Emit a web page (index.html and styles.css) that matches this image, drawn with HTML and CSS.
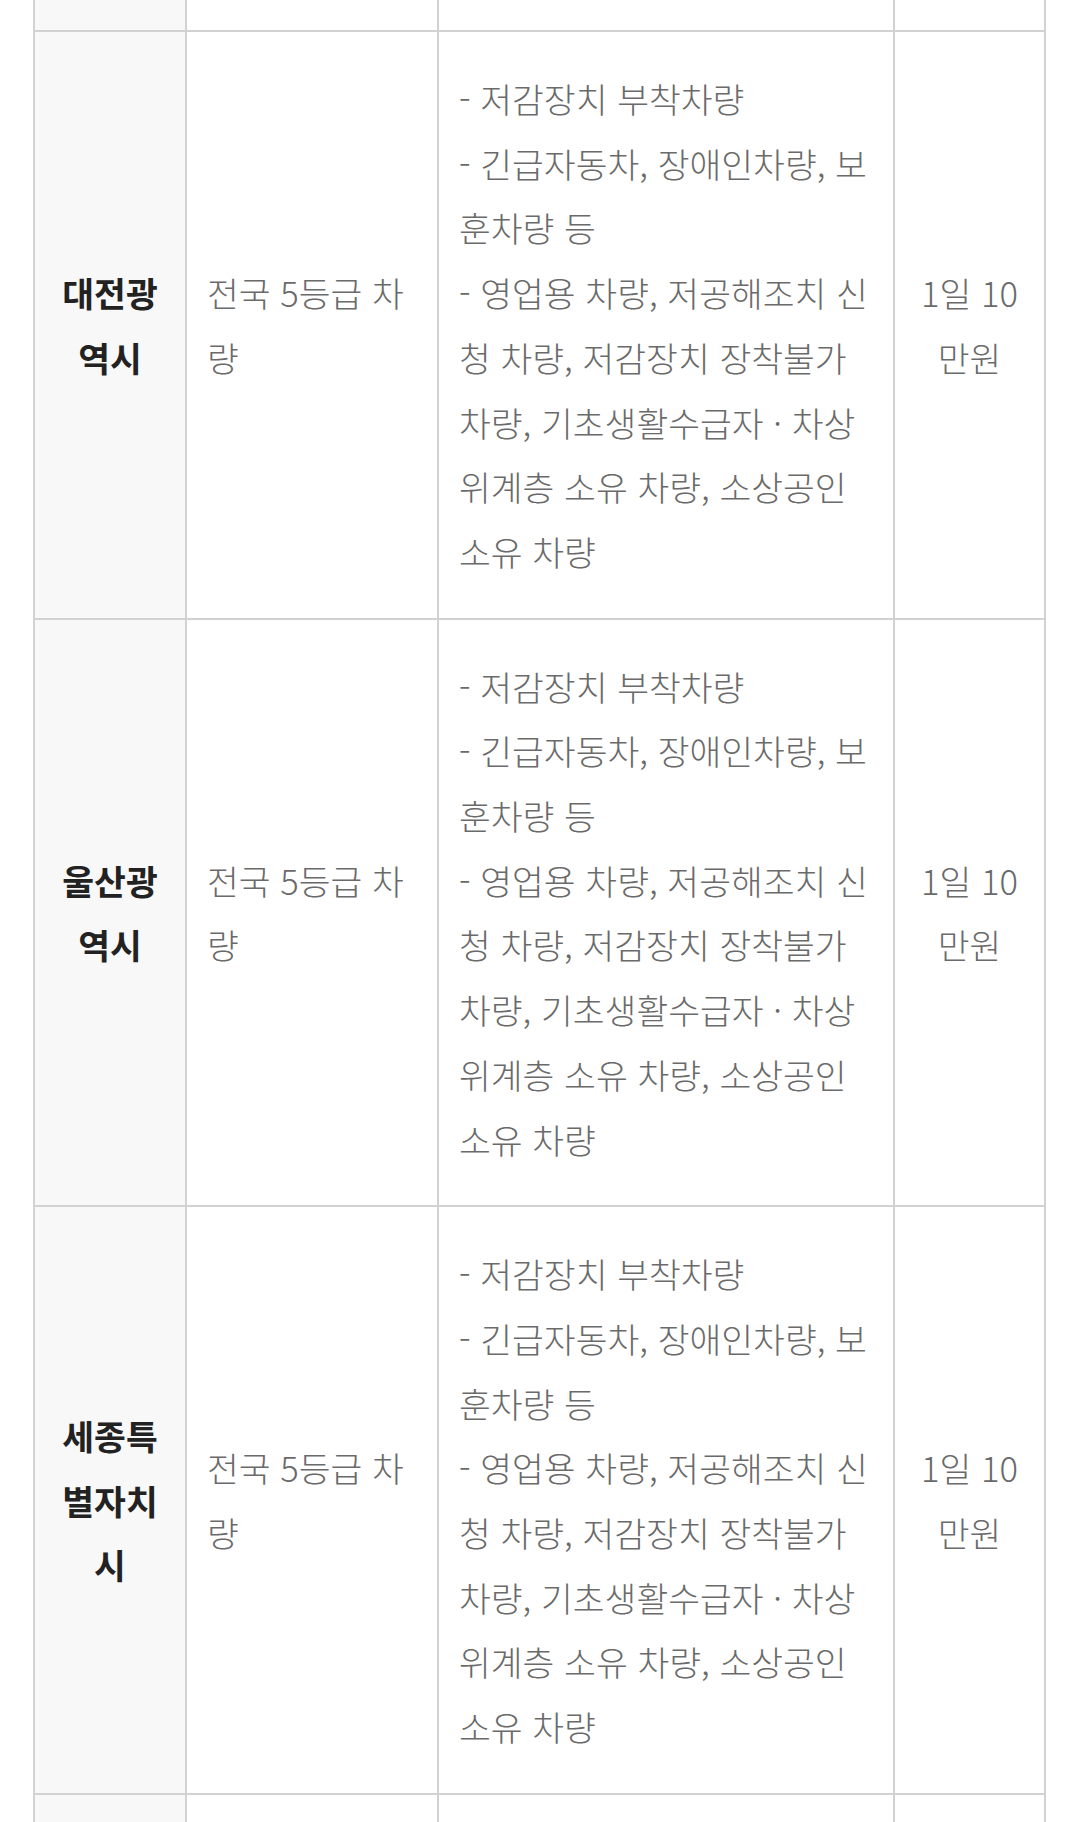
FILE: index.html
```html
<!DOCTYPE html>
<html lang="ko">
<head>
<meta charset="utf-8">
<title>지역별 운행제한</title>
<link rel="stylesheet" href="styles.css">
</head>
<body>
<div class="page">
  <table class="rules">
    <colgroup>
      <col class="c-region">
      <col class="c-target">
      <col class="c-exempt">
      <col class="c-fine">
    </colgroup>
    <tbody>
      <tr class="cut-top">
        <th></th><td></td><td></td><td></td>
      </tr>
      <tr>
        <th>대전광역시</th>
        <td>전국 5등급 차량</td>
        <td>- 저감장치 부착차량<br>- 긴급자동차, 장애인차량, 보훈차량 등<br>- 영업용 차량, 저공해조치 신청 차량, 저감장치 장착불가 차량, 기초생활수급자 · 차상위계층 소유 차량, 소상공인 소유 차량</td>
        <td class="fine">1일 10만원</td>
      </tr>
      <tr>
        <th>울산광역시</th>
        <td>전국 5등급 차량</td>
        <td>- 저감장치 부착차량<br>- 긴급자동차, 장애인차량, 보훈차량 등<br>- 영업용 차량, 저공해조치 신청 차량, 저감장치 장착불가 차량, 기초생활수급자 · 차상위계층 소유 차량, 소상공인 소유 차량</td>
        <td class="fine">1일 10만원</td>
      </tr>
      <tr>
        <th>세종특별자치시</th>
        <td>전국 5등급 차량</td>
        <td>- 저감장치 부착차량<br>- 긴급자동차, 장애인차량, 보훈차량 등<br>- 영업용 차량, 저공해조치 신청 차량, 저감장치 장착불가 차량, 기초생활수급자 · 차상위계층 소유 차량, 소상공인 소유 차량</td>
        <td class="fine">1일 10만원</td>
      </tr>
      <tr class="cut-bottom">
        <th></th><td></td><td></td><td></td>
      </tr>
    </tbody>
  </table>
</div>
</body>
</html>
```
FILE: styles.css
```css
html, body {
  margin: 0;
  padding: 0;
  background: #ffffff;
}

.page {
  padding: 0 33px;
  overflow: hidden;
  height: 1822px;
  box-sizing: border-box;
}

.rules {
  width: 1013px;
  border-collapse: collapse;
  table-layout: fixed;
  font-family: "Noto Sans CJK KR", "Noto Sans", sans-serif;
  font-size: 34.6px;
  line-height: 64.7px;
}

.c-region { width: 152px; }
.c-target { width: 252px; }
.c-exempt { width: 456px; }
.c-fine { width: 151px; }

.rules th,
.rules td {
  border: 2px solid #d2d2d2;
  padding: 34px 20px;
  vertical-align: middle;
  word-break: break-all;
}

.rules th {
  background: #f8f8f8;
  color: #222222;
  font-weight: 700;
  text-align: center;
}

.rules td {
  font-family: "Noto Sans CJK KR Light", "Noto Sans CJK KR DemiLight", "Noto Sans CJK KR", "Noto Sans", sans-serif;
  color: #6a6a6a;
  font-weight: 300;
  text-align: left;
}

.rules td.fine {
  text-align: center;
}

.cut-top th,
.cut-top td {
  border-top: 0;
  padding: 0;
  height: 30px;
}

.cut-bottom th,
.cut-bottom td {
  border-bottom: 0;
  padding: 0;
  height: 200px;
}
```
